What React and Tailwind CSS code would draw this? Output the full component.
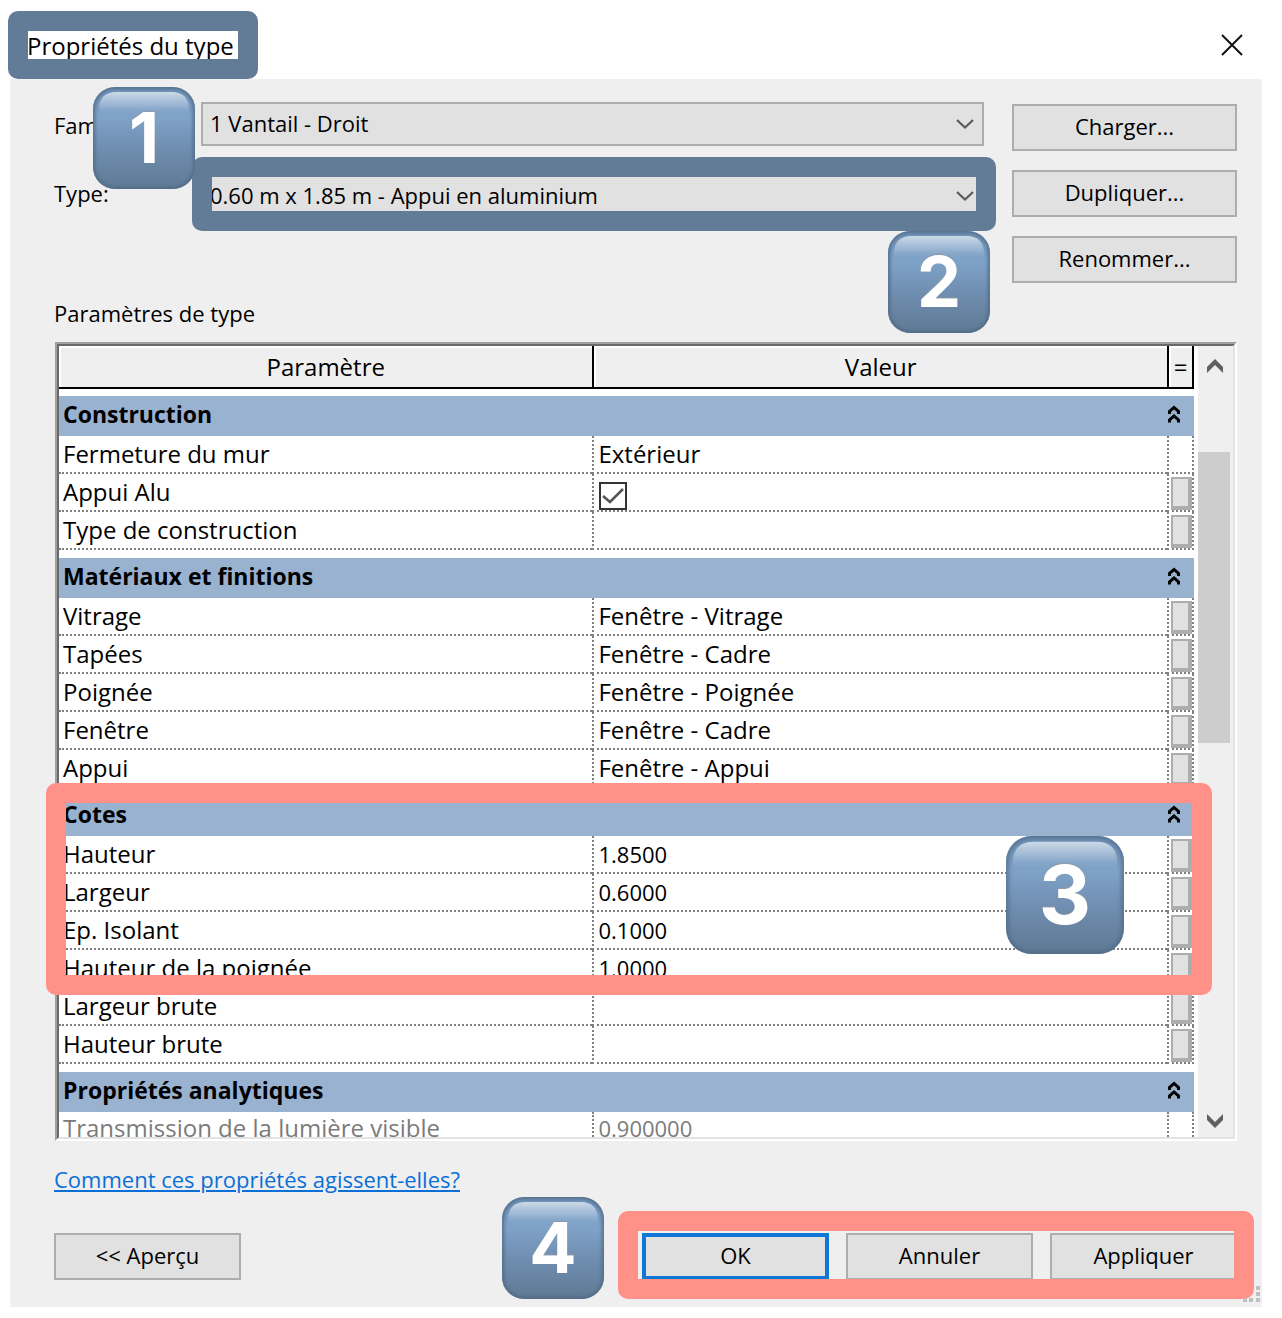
import { useId } from "react";

const groups = [
  {
    title: "Construction",
    rows: [
      { name: "Fermeture du mur", value: "Extérieur" },
      { name: "Appui Alu", checked: true, link: true },
      { name: "Type de construction", value: "", link: true },
    ],
  },
  {
    title: "Matériaux et finitions",
    rows: [
      { name: "Vitrage", value: "Fenêtre - Vitrage", link: true },
      { name: "Tapées", value: "Fenêtre - Cadre", link: true },
      { name: "Poignée", value: "Fenêtre - Poignée", link: true },
      { name: "Fenêtre", value: "Fenêtre - Cadre", link: true },
      { name: "Appui", value: "Fenêtre - Appui", link: true },
    ],
  },
  {
    title: "Cotes",
    rows: [
      { name: "Hauteur", value: "1.8500", numeric: true, link: true },
      { name: "Largeur", value: "0.6000", numeric: true, link: true },
      { name: "Ep. Isolant", value: "0.1000", numeric: true, link: true },
      { name: "Hauteur de la poignée", value: "1.0000", numeric: true, link: true },
      { name: "Largeur brute", value: "", link: true },
      { name: "Hauteur brute", value: "", link: true },
    ],
  },
  {
    title: "Propriétés analytiques",
    rows: [{ name: "Transmission de la lumière visible", value: "0.900000", numeric: true, partial: true }],
  },
];

function Badge({ digit, className }) {
  const id = useId();
  return (
    <svg viewBox="0 0 102 102" className={`pointer-events-none absolute ${className}`} aria-hidden="true">
      <defs>
        <linearGradient id={`${id}b`} x1="0" y1="0" x2="0" y2="1">
          <stop offset="0" stopColor="#6f93b8" />
          <stop offset="0.3" stopColor="#7fa2c8" />
          <stop offset="0.65" stopColor="#6d8bad" />
          <stop offset="1" stopColor="#5f7993" />
        </linearGradient>
        <linearGradient id={`${id}g`} x1="0" y1="0" x2="0" y2="1">
          <stop offset="0" stopColor="#d3dfea" stopOpacity="0.95" />
          <stop offset="0.5" stopColor="#b5cae0" stopOpacity="0.6" />
          <stop offset="1" stopColor="#7fa2c8" stopOpacity="0" />
        </linearGradient>
        <filter id={`${id}f`} x="-10%" y="-10%" width="120%" height="120%">
          <feGaussianBlur stdDeviation="1.8" />
        </filter>
        <clipPath id={`${id}c`}>
          <rect width="102" height="102" rx="22" />
        </clipPath>
      </defs>
      <g clipPath={`url(#${id}c)`}>
        <rect width="102" height="102" fill={`url(#${id}b)`} />
        <rect
          width="102"
          height="102"
          rx="22"
          fill="none"
          stroke="#506a84"
          strokeOpacity="0.75"
          strokeWidth="5"
          filter={`url(#${id}f)`}
        />
        <path d="M6 30V23Q6 5 24 5H78Q96 5 96 23V30Z" fill={`url(#${id}g)`} />
      </g>
      <text
        x="51"
        y="76"
        textAnchor="middle"
        className="fill-white font-['Inter',sans-serif] text-[70px] font-bold [filter:drop-shadow(0_-1px_0_#8d9aa8)]"
      >
        {digit}
      </text>
    </svg>
  );
}

function Frame({ className }) {
  return <div aria-hidden="true" className={`pointer-events-none absolute rounded-[10px] border-20 ${className}`} />;
}

function PushButton({ children, className = "w-[187px]" }) {
  return (
    <button className={`h-[47px] border-2 border-[#adadad] bg-[#e1e1e1] pb-[2px] text-center ${className}`}>
      {children}
    </button>
  );
}

function Select({ id, value }) {
  return (
    <>
      <select
        id={id}
        defaultValue={value}
        className="h-11 w-full appearance-none border-2 border-[#adadad] bg-[#e1e1e1] pb-[2px] pl-[7px] outline-none"
      >
        <option>{value}</option>
      </select>
      <svg viewBox="0 0 18 12" className="pointer-events-none absolute top-4 right-[10px] h-3 w-[18px]" aria-hidden="true">
        <path d="M1 2L9 9.500L17 2" fill="none" stroke="#5a5a5a" strokeWidth="2.200" />
      </svg>
    </>
  );
}

function DoubleChevron() {
  return (
    <svg viewBox="0 0 12 18" className="h-[18px] w-3" aria-hidden="true">
      <path d="M1.500 9V6.500L6 2.500L10.500 6.500V9M1.500 17.500V15L6 11L10.500 15V17.500" fill="none" stroke="#000" strokeWidth="3" />
    </svg>
  );
}

function ScrollArrow({ down }) {
  return (
    <svg viewBox="0 0 16 14" className="h-[14px] w-4" aria-hidden="true">
      <path
        d={down ? "M0 0L8 8L16 0V6L8 14L0 6Z" : "M0 14L8 6L16 14V8L8 0L0 8Z"}
        fill="#606060"
      />
    </svg>
  );
}

function ParameterRow({ row }) {
  const id = useId();
  const size = row.partial ? "h-[25px]" : "h-[38px] border-b-2";
  const ink = row.partial ? "text-[#7b7b7b]" : "";
  const cell = `border-dotted border-[#808080] p-0 align-top ${size} ${ink}`;
  const text = `whitespace-nowrap ${row.partial ? "h-[25px] leading-8" : "leading-9"}`;
  return (
    <tr>
      <td className={`${cell} pl-1`}>
        <div className={text}>{row.checked ? <label htmlFor={id}>{row.name}</label> : row.name}</div>
      </td>
      <td className={`${cell} border-l-2 pl-1`}>
        {row.checked ? (
          <span className="relative mt-2 ml-[1px] block size-7">
            <input id={id} type="checkbox" defaultChecked className="block size-7 appearance-none border-2 border-[#333] bg-white" />
            <svg viewBox="0 0 28 28" className="pointer-events-none absolute inset-0 size-7" aria-hidden="true">
              <path d="M4 14L11 20L24 7" fill="none" stroke="#555" strokeWidth="2.600" />
            </svg>
          </span>
        ) : (
          <div className={`${text} ${row.numeric ? "text-[22px]" : ""}`}>{row.value}</div>
        )}
      </td>
      <td className={`${cell} border-x-2`}>
        {row.link && (
          <button
            aria-label={`Associer ${row.name}`}
            className="mt-[3px] ml-[2px] block h-[33px] w-[21px] border-t-2 border-r-4 border-b-4 border-l-2 border-[#adadad] bg-[#e1e1e1]"
          />
        )}
      </td>
    </tr>
  );
}

export default function App() {
  const head = "h-[43px] border-b-2 border-black bg-[#efefef] p-0 text-center font-normal shadow-[inset_2px_2px_0_#fff]";
  return (
    <div className="bg-white pr-5 pb-[11px] pl-[10px] font-['Open_Sans','Noto_Sans',sans-serif] text-[22px] text-black">
      <header className="relative flex h-[79px] items-center justify-between pr-[18px] pl-[17px]">
        <h1 className="mb-[-13px] text-[24px] leading-8">Propriétés du type</h1>
        <button aria-label="Fermer" className="mb-[-10px]">
          <svg viewBox="0 0 24 24" className="size-6" aria-hidden="true">
            <path d="M2 2L22 22M22 2L2 22" stroke="#111" strokeWidth="2" />
          </svg>
        </button>
        <Frame className="top-[11px] left-[-2px] h-[68px] w-[250px] border-[#627b97]" />
      </header>

      <main className="relative bg-[#efefef] pt-[23px] pr-[25px] pb-[27px] pl-11">
        <section className="relative flex gap-7">
          <div className="flex flex-1 flex-col gap-[26px]">
            <div className="flex">
              <label htmlFor="famille" className="w-[147px] leading-[46px]">
                Famille:
              </label>
              <div className="relative flex-1">
                <Select id="famille" value="1 Vantail - Droit" />
              </div>
            </div>
            <div className="flex h-11">
              <label htmlFor="type" className="w-[147px] leading-[38px]">
                Type:
              </label>
              <div className="relative flex-1">
                <Select id="type" value="0.60 m x 1.85 m - Appui en aluminium" />
                <Frame className="-top-[17px] -right-3 -left-[9px] h-[74px] border-[#627b97]" />
              </div>
            </div>
          </div>
          <div className="flex w-[225px] flex-col gap-[19px] pt-[2px]">
            <PushButton className="w-full">Charger...</PushButton>
            <PushButton className="w-full">Dupliquer...</PushButton>
            <PushButton className="w-full">Renommer...</PushButton>
          </div>
          <Badge digit="1" className="-top-[15px] left-[39px] size-[102px]" />
          <Badge digit="2" className="top-[129px] right-[247px] size-[102px]" />
        </section>

        <h2 className="mt-[14px] mb-[13px] leading-8">Paramètres de type</h2>

        <section className="ml-[1px] border-2 border-t-[#a0a0a0] border-r-white border-b-white border-l-[#a0a0a0] text-[24px]">
          <div className="relative flex border-2 border-t-[#696969] border-r-[#e3e3e3] border-b-[#e3e3e3] border-l-[#696969] bg-white">
            <table className="flex-1 table-fixed border-separate border-spacing-0">
              <colgroup>
                <col className="w-[47%]" />
                <col />
                <col className="w-[27px]" />
              </colgroup>
              <thead>
                <tr>
                  <th scope="col" className={head}>Paramètre</th>
                  <th scope="col" className={`${head} border-l-2`}>Valeur</th>
                  <th scope="col" className={`${head} border-x-2`}>=</th>
                </tr>
              </thead>
              {groups.map((group, index) => (
                <tbody key={group.title}>
                  <tr>
                    <th
                      scope="rowgroup"
                      colSpan={3}
                      className={`border-white bg-[#99b2d0] p-0 pr-[14px] pb-1 pl-1 text-left text-[23px] font-bold ${
                        index === 0 ? "h-[47px] border-t-7" : "h-12 border-t-8"
                      }`}
                    >
                      <div className="flex items-center justify-between leading-9">
                        {group.title}
                        <button aria-label={`Réduire ${group.title}`}>
                          <DoubleChevron />
                        </button>
                      </div>
                    </th>
                  </tr>
                  {group.rows.map((row) => (
                    <ParameterRow key={row.name} row={row} />
                  ))}
                </tbody>
              ))}
            </table>
            <div className="ml-1 flex w-[35px] flex-col bg-[#efefef]">
              <button aria-label="Défiler vers le haut" className="flex h-[106px] items-start justify-center pt-[13px] pr-[2px]">
                <ScrollArrow />
              </button>
              <div className="h-[291px] w-8 bg-[#cdcdcd]" />
              <button aria-label="Défiler vers le bas" className="mt-auto flex h-10 items-end justify-center pr-[2px] pb-[9px]">
                <ScrollArrow down />
              </button>
            </div>
            <Frame className="right-[21px] bottom-[142px] -left-[13px] h-[212px] border-[#ff9189]" />
            <Badge digit="3" className="right-[109px] bottom-[183px] size-[118px]" />
          </div>
        </section>

        <a href="#aide" className="mt-[22px] inline-block leading-8 text-[#0a6fd6] underline decoration-2 underline-offset-2">
          Comment ces propriétés agissent-elles?
        </a>

        <footer className="relative mt-[37px] flex gap-[17px]">
          <PushButton className="mr-auto w-[187px]">&lt;&lt; Aperçu</PushButton>
          <button className="h-[47px] w-[187px] border-4 border-[#0f78d7] bg-[#e1e1e1] pb-[2px] text-center">OK</button>
          <PushButton>Annuler</PushButton>
          <PushButton>Appliquer</PushButton>
          <Frame className="-top-[22px] -right-[17px] h-[88px] w-[636px] border-[#ff9189]" />
          <Badge digit="4" className="-top-[36px] right-[633px] size-[102px]" />
        </footer>

        <svg viewBox="0 0 18 18" className="absolute right-[2px] bottom-1 size-[18px]" aria-hidden="true">
          <path d="M14 1h4v4h-4zM14 7h4v4h-4zM14 13h4v4h-4zM7 13h4v4h-4zM1 13h4v4h-4z" fill="#bfbfbf" />
        </svg>
      </main>
    </div>
  );
}
